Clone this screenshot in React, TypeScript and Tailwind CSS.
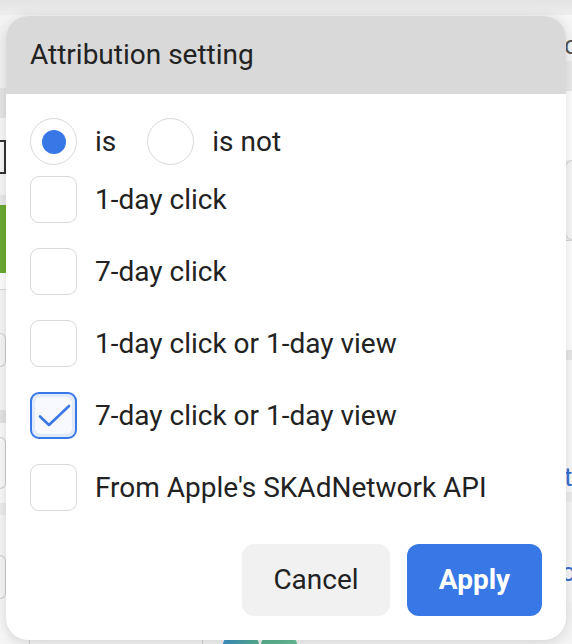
const options = [
  { label: "1-day click", checked: false },
  { label: "7-day click", checked: false },
  { label: "1-day click or 1-day view", checked: false },
  { label: "7-day click or 1-day view", checked: true },
  { label: "From Apple's SKAdNetwork API", checked: false },
];

const Radio = ({ on }: { on: boolean }) => (
  <div className="w-[47px] h-[47px] rounded-full border-[1.5px] border-[#d9d9d9] bg-white flex items-center justify-center shrink-0">
    {on && <div className="w-[24px] h-[24px] rounded-full bg-[#3778e6]" />}
  </div>
);

const Checkbox = ({ on }: { on: boolean }) =>
  on ? (
    <div className="w-[47px] h-[47px] rounded-[9px] border-2 border-[#3b78e7] bg-[#e1eafb] p-[3px] shrink-0">
      <div className="w-full h-full rounded-[6px] bg-[#f7f9fe]">
        <svg width="37" height="37" viewBox="0 0 37 37" fill="none">
          <path d="M5 19.5 L14 28 L34 9" stroke="#3b78e7" strokeWidth="2.6" strokeLinecap="round" strokeLinejoin="round" />
        </svg>
      </div>
    </div>
  ) : (
    <div className="w-[47px] h-[47px] rounded-[9px] border-[1.5px] border-[#d9d9d9] bg-white shrink-0" />
  );

// page behind the popup, only its edges show
const Backdrop = () => (
  <div className="flex flex-col w-full h-full text-[28px] leading-none">
    <div className="h-[15px] bg-gradient-to-b from-[#e4e4e4] to-[#eeeeee]" />
    <div className="flex-1 flex justify-between bg-[#f5f5f5]">
      {/* left edge */}
      <div className="w-[6px] flex flex-col">
        <div className="h-[73px] bg-[#f3f3f3]" />
        <div className="h-[30px] bg-[#e6e6e6]" />
        <div className="h-[77px] bg-[#f8f8f8] flex flex-col justify-center">
          <div className="w-[6px] h-[34px] border-2 border-l-0 border-[#333]" />
        </div>
        <div className="h-[10px] bg-[#ebebeb]" />
        <div className="h-[68px] bg-[#6aab33]" />
        <div className="h-[17px] bg-white border-b border-[#dcdcdc]" />
        <div className="h-[120px] bg-[#f7f7f7] flex flex-col justify-center">
          <div className="w-[6px] h-[34px] rounded-r-[8px] border-[1.5px] border-l-0 border-[#cfcfcf]" />
        </div>
        <div className="h-[13px] bg-[#e5e5e5]" />
        <div className="h-[80px] bg-[#fafafa] flex flex-col justify-center">
          <div className="w-[6px] h-[52px] rounded-r-[8px] border-[1.5px] border-l-0 border-[#cfcfcf]" />
        </div>
        <div className="h-[12px] bg-[#ededed]" />
        <div className="flex-1 bg-[#f7f7f7] flex flex-col justify-center">
          <div className="w-[6px] h-[44px] rounded-r-[8px] border-[1.5px] border-l-0 border-[#cfcfcf]" />
        </div>
      </div>

      {/* right edge */}
      <div className="w-[7px] flex flex-col">
        <div className="h-[46px] bg-[#f6f6f6] flex items-end">
          <span className="text-[#555] text-[26px] -ml-[1px] mb-[3px]">c</span>
        </div>
        <div className="h-[30px] bg-[#ebebeb]" />
        <div className="h-[69px] bg-white" />
        <div className="h-[80px] bg-[#f8f8f8] rounded-l-[8px] border-[1.5px] border-r-0 border-[#d6d6d6]" />
        <div className="h-[110px] bg-white border-t border-[#d8d8d8]" />
        <div className="h-[10px] bg-[#e8e8e8]" />
        <div className="h-[132px] bg-[#fafafa] flex items-end">
          <span className="text-[#3a6fd0] text-[26px] -ml-[1px] mb-[2px]">t</span>
        </div>
        <div className="h-[10px] bg-[#eeeeee]" />
        <div className="h-[100px] bg-[#f7f7f7] flex items-end">
          <span className="text-[#3a6fd0] text-[26px] -ml-[4px] mb-[17px]">o</span>
        </div>
        <div className="flex-1 bg-[#f4f4f4]" />
      </div>
    </div>
    <div className="h-[6px] bg-[#f4f4f4] flex">
      <div className="w-[30px] border-r border-[#cfcfcf]" />
      <div className="w-[173px] border-r border-[#cfcfcf]" />
      <div className="ml-[20px] flex gap-[2px] items-end">
        <div className="w-[36px] h-[6px] rounded-t-full bg-gradient-to-r from-[#3f8fc4] to-[#58b08f]" />
        <div className="w-[36px] h-[6px] rounded-t-full bg-gradient-to-r from-[#58b08f] to-[#6bbf9a]" />
      </div>
    </div>
  </div>
);

export default function App() {
  return (
    <div className="relative w-[572px] h-[644px] overflow-hidden font-['Roboto',sans-serif] text-[#222]">
      <Backdrop />

      <div className="absolute left-[6px] top-[16px] w-[560px] h-[624px] rounded-[22px] bg-white overflow-hidden shadow-[0_2px_14px_rgba(0,0,0,0.14)] flex flex-col">
        <div className="h-[78px] bg-[#d9d9d9] flex items-center px-[24px] text-[28px] leading-none">
          Attribution setting
        </div>

        <div className="flex flex-col px-[24px] pt-[24px] text-[28px] leading-none">
          <div className="flex items-center h-[47px]">
            <Radio on />
            <span className="ml-[18px]">is</span>
            <div className="ml-[31px]">
              <Radio on={false} />
            </div>
            <span className="ml-[18px]">is not</span>
          </div>

          <div className="flex flex-col gap-[25px] mt-[11px]">
            {options.map((o) => (
              <div key={o.label} className="flex items-center h-[47px] gap-[18px]">
                <Checkbox on={o.checked} />
                <span>{o.label}</span>
              </div>
            ))}
          </div>

          <div className="flex justify-end gap-[17px] mt-[33px]">
            <button className="w-[148px] h-[72px] rounded-[12px] bg-[#f1f1f1] text-[#222] text-[28px]">
              Cancel
            </button>
            <button className="w-[135px] h-[72px] rounded-[12px] bg-[#3778e6] text-white text-[28px] font-bold">
              Apply
            </button>
          </div>
        </div>
      </div>
    </div>
  );
}
